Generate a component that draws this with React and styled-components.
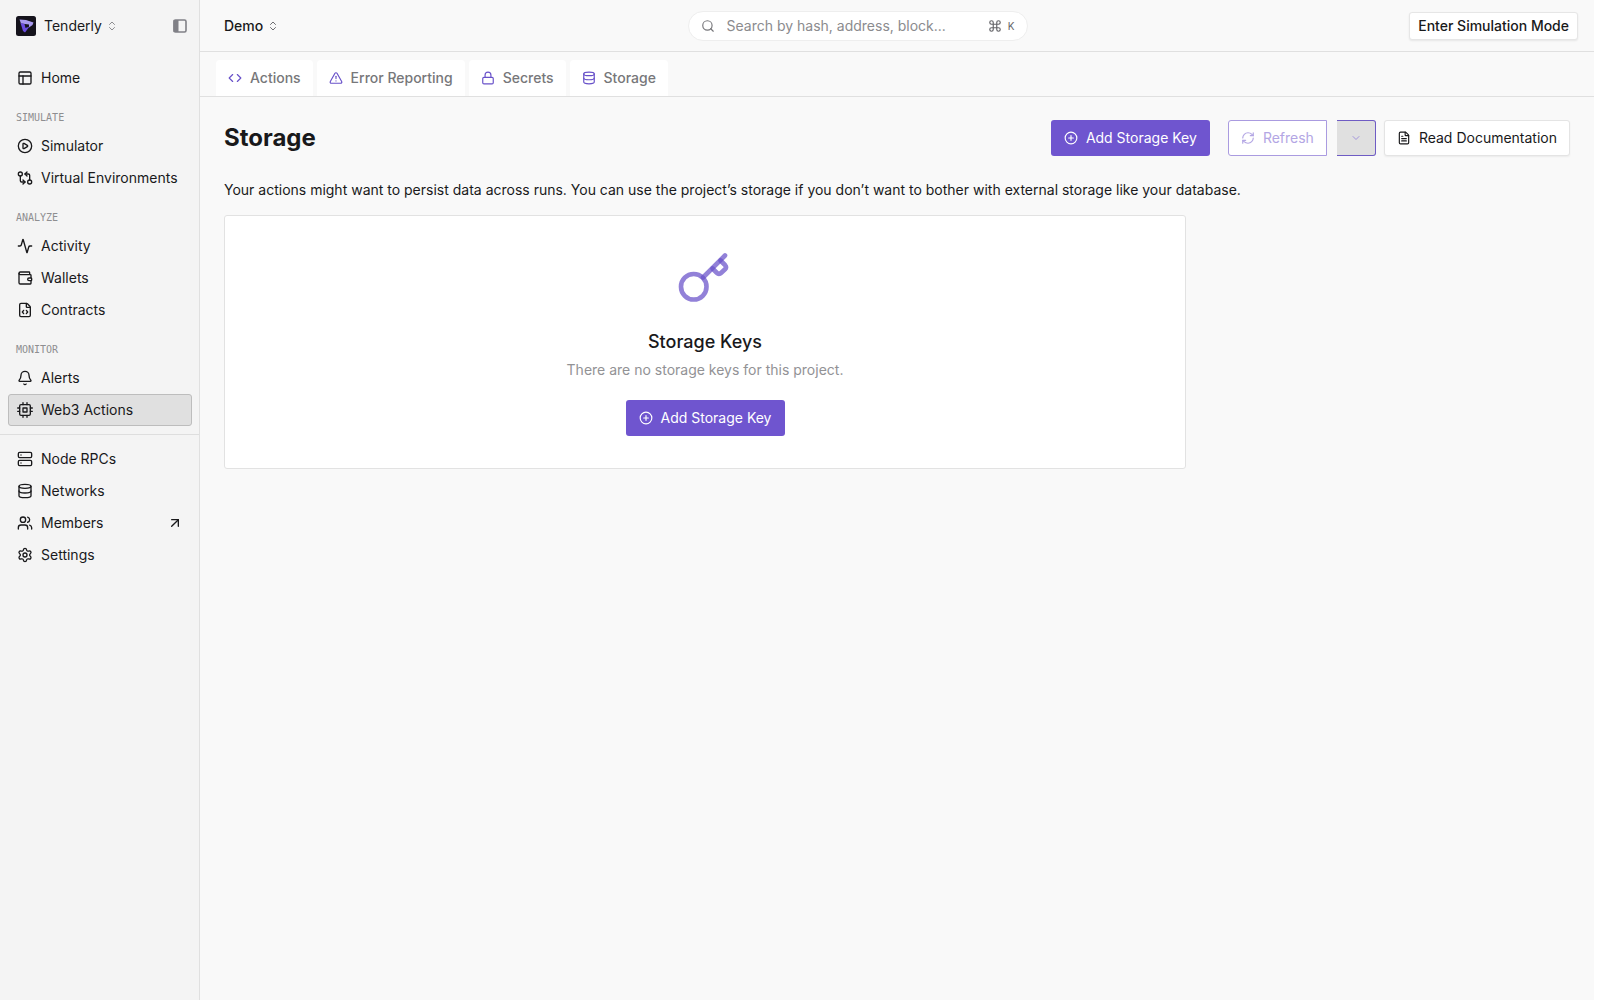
import styled, { createGlobalStyle, css } from "styled-components"
import {
    Activity,
    ArrowUpRight,
    Bell,
    ChevronDown,
    ChevronsUpDown,
    CirclePlay,
    CirclePlus,
    Code,
    Command,
    Database,
    FileCode,
    FileText,
    GitCompareArrows,
    Lock,
    PanelsTopLeft,
    RefreshCw,
    Search,
    Server,
    Settings,
    TriangleAlert,
    Users,
    Wallet,
} from "lucide-react"
import { FiCpu } from "react-icons/fi"

const topLinks = [{ label: "Home", icon: PanelsTopLeft }]

const sections = [
    {
        title: "Simulate",
        links: [
            { label: "Simulator", icon: CirclePlay },
            { label: "Virtual Environments", icon: GitCompareArrows },
        ],
    },
    {
        title: "Analyze",
        links: [
            { label: "Activity", icon: Activity },
            { label: "Wallets", icon: Wallet },
            { label: "Contracts", icon: FileCode },
        ],
    },
    {
        title: "Monitor",
        links: [
            { label: "Alerts", icon: Bell },
            { label: "Web3 Actions", icon: FiCpu, active: true },
        ],
    },
]

const bottomLinks = [
    { label: "Node RPCs", icon: Server },
    { label: "Networks", icon: Database },
    { label: "Members", icon: Users, external: true },
    { label: "Settings", icon: Settings },
]

const tabs = [
    { label: "Actions", icon: Code },
    { label: "Error Reporting", icon: TriangleAlert },
    { label: "Secrets", icon: Lock },
    { label: "Storage", icon: Database },
]

function Logo() {
    return (
        <svg width="20" height="20" viewBox="0 0 20 20" aria-hidden="true">
            <rect width="20" height="20" rx="2.5" fill="#15131c" />
            <path d="M3.5 3.5 L10 4 L17.5 6.5 L16.5 9 L13 11.5 L13 8.5 L5 7.5 Z" fill="#a99af0" />
            <path d="M4.5 7 L8.5 8 L9.5 12 L13.500 10.500 L9 16.500 L7 15 Z" fill="#6a4be0" />
        </svg>
    )
}

function KeyIcon() {
    return (
        <svg width="60" height="60" viewBox="0 0 24 24" fill="none" stroke="#6851c9" strokeOpacity="0.72" strokeWidth="1.85" strokeLinecap="round" strokeLinejoin="round" aria-hidden="true">
            <circle cx="7.5" cy="15.5" r="5.1" />
            <path d="M11.2 11.8 L20 3" />
            <path d="M15 8.2 L16.7 9.9 Q17.6 10.8 18.5 9.9 L20 8.5 Q20.8 7.7 20 6.8 L18.2 5" />
        </svg>
    )
}

function NavLink({ link }) {
    const Icon = link.icon
    return (
        <NavItem href="#" $active={link.active} aria-current={link.active ? "page" : undefined}>
            <Icon size={16} />
            <span>{link.label}</span>
            {link.external && <ArrowUpRight size={16} />}
        </NavItem>
    )
}

export default function App() {
    return (
        <Page>
            <GlobalStyle />
            <Sidebar>
                <SidebarHeader>
                    <AccountButton type="button">
                        <Logo />
                        Tenderly
                        <ChevronsUpDown size={12} color="#8d8d90" />
                    </AccountButton>
                    <CollapseButton type="button" aria-label="Collapse sidebar">
                        <svg width="16" height="16" viewBox="0 0 16 16" fill="none">
                            <rect x="2" y="2" width="12" height="12" rx="1.5" stroke="#808086" strokeWidth="1.6" />
                            <rect x="1.5" y="2" width="5" height="12" fill="#808086" />
                        </svg>
                    </CollapseButton>
                </SidebarHeader>
                <Nav>
                    {topLinks.map((link) => <NavLink key={link.label} link={link} />)}
                    {sections.map((section) => (
                        <Section key={section.title}>
                            <SectionTitle>{section.title}</SectionTitle>
                            {section.links.map((link) => <NavLink key={link.label} link={link} />)}
                        </Section>
                    ))}
                </Nav>
                <BottomNav>
                    {bottomLinks.map((link) => <NavLink key={link.label} link={link} />)}
                </BottomNav>
            </Sidebar>
            <Content>
                <TopBar>
                    <ProjectButton type="button">
                        Demo
                        <ChevronsUpDown size={12} color="#6e6e72" />
                    </ProjectButton>
                    <SearchBox>
                        <Search size={14} color="#77777b" />
                        <input type="text" aria-label="Search" placeholder="Search by hash, address, block..." />
                        <Shortcut>
                            <Command size={14} />
                            <kbd>K</kbd>
                        </Shortcut>
                    </SearchBox>
                    <TopBarEnd>
                        <SimulationButton type="button">Enter Simulation Mode</SimulationButton>
                    </TopBarEnd>
                </TopBar>
                <Tabs>
                    {tabs.map(({ label, icon: Icon }) => (
                        <Tab key={label} href="#">
                            <Icon size={14} />
                            {label}
                        </Tab>
                    ))}
                </Tabs>
                <Main>
                    <PageHeader>
                        <h1>Storage</h1>
                        <Toolbar>
                            <PrimaryButton type="button">
                                <CirclePlus size={14} />
                                Add Storage Key
                            </PrimaryButton>
                            <RefreshGroup>
                                <RefreshButton type="button" disabled>
                                    <RefreshCw size={14} />
                                    Refresh
                                </RefreshButton>
                                <RefreshToggle type="button" disabled aria-label="Refresh interval">
                                    <ChevronDown size={12} />
                                </RefreshToggle>
                            </RefreshGroup>
                            <SecondaryButton type="button">
                                <FileText size={14} />
                                Read Documentation
                            </SecondaryButton>
                        </Toolbar>
                    </PageHeader>
                    <Description>
                        Your actions might want to persist data across runs. You can use the project’s storage if you don’t want to bother with external storage like your database.
                    </Description>
                    <EmptyCard>
                        <KeyIcon />
                        <h2>Storage Keys</h2>
                        <p>There are no storage keys for this project.</p>
                        <PrimaryButton type="button">
                            <CirclePlus size={14} />
                            Add Storage Key
                        </PrimaryButton>
                    </EmptyCard>
                </Main>
            </Content>
        </Page>
    )
}

const GlobalStyle = createGlobalStyle`
    * {
        box-sizing: border-box;
    }
    body {
        margin: 0;
        background-color: #ffffff;
        color: #19191b;
        font-family: Inter, "Liberation Sans", sans-serif;
        font-size: 14px;
        line-height: 20px;
    }
    button, input, kbd {
        font: inherit;
        color: inherit;
    }
    button {
        cursor: pointer;
        white-space: nowrap;
    }
    svg {
        flex-shrink: 0;
    }
`

const Page = styled.div`
    display: flex;
    min-height: 100vh;
    padding-right: 6px;
`

const Sidebar = styled.aside`
    display: flex;
    flex-direction: column;
    flex-shrink: 0;
    width: 200px;
    background-color: #f4f4f4;
    border-right: 1px solid #e0e0e0;
`

const SidebarHeader = styled.div`
    display: flex;
    align-items: center;
    justify-content: space-between;
    height: 52px;
    padding: 0 11px 0 16px;
`

const plainButton = css`
    display: flex;
    align-items: center;
    padding: 0;
    border: none;
    background: none;
`

const AccountButton = styled.button`
    ${plainButton}
    gap: 8px;
    >svg:last-child {
        margin-left: -4px;
    }
`

const CollapseButton = styled.button`
    ${plainButton}
`

const Nav = styled.nav`
    display: flex;
    flex-direction: column;
    padding: 10px 7px 8px 8px;
`

const BottomNav = styled(Nav)`
    padding-top: 8px;
    border-top: 1px solid #dedede;
`

const Section = styled.section`
    display: flex;
    flex-direction: column;
`

const SectionTitle = styled.h2`
    margin: 0;
    padding: 14px 8px 2px;
    font-family: "DejaVu Sans Mono", "Liberation Mono", monospace;
    font-size: 10px;
    font-weight: 400;
    line-height: 20px;
    text-transform: uppercase;
    color: #8e8e90;
`

const NavItem = styled.a`
    display: flex;
    align-items: center;
    gap: 8px;
    height: 32px;
    padding: 0 8px;
    border: 1px solid ${(props) => (props.$active ? "#bdbdbd" : "transparent")};
    border-radius: 3px;
    background-color: ${(props) => (props.$active ? "#e0e0e0" : "transparent")};
    color: inherit;
    text-decoration: none;
    white-space: nowrap;
    >span {
        flex: 1;
    }
`

const Content = styled.div`
    flex: 1;
    min-width: 0;
    background-color: #f9f9f9;
`

const TopBar = styled.header`
    display: grid;
    grid-template-columns: 16fr 340px 19fr;
    align-items: center;
    height: 52px;
    padding: 0 16px 0 24px;
    border-bottom: 1px solid #e0e0e0;
`

const ProjectButton = styled.button`
    ${plainButton}
    gap: 4px;
    font-weight: 500;
`

const SearchBox = styled.div`
    display: flex;
    align-items: center;
    gap: 12px;
    height: 30px;
    padding: 0 12px;
    border: 1px solid #eeeeee;
    border-radius: 15px;
    background-color: #ffffff;
    >input {
        flex: 1;
        min-width: 0;
        padding: 0;
        border: none;
        outline: none;
        background: none;
        &::placeholder {
            color: #8b8b8e;
            opacity: 1;
        }
    }
`

const Shortcut = styled.span`
    display: flex;
    align-items: center;
    gap: 6px;
    color: #656569;
    >kbd {
        font-size: 10px;
    }
`

const TopBarEnd = styled.div`
    display: flex;
    justify-content: flex-end;
`

const SimulationButton = styled.button`
    height: 28px;
    padding: 0 8px;
    border: 1px solid #e6e6e6;
    border-radius: 3px;
    background-color: #ffffff;
    box-shadow: 0 1px 2px rgba(0, 0, 0, 0.08);
    font-weight: 500;
`

const Tabs = styled.nav`
    display: flex;
    align-items: flex-end;
    gap: 4px;
    height: 45px;
    padding: 0 16px;
    border-bottom: 1px solid #e0e0e0;
`

const Tab = styled.a`
    display: flex;
    align-items: center;
    gap: 8px;
    height: 36px;
    padding: 0 12px;
    border-radius: 4px 4px 0 0;
    background-color: #ffffff;
    color: #77777a;
    font-weight: 500;
    text-decoration: none;
    >svg {
        color: #6851c9;
    }
`

const Main = styled.main`
    padding: 23px 24px;
`

const PageHeader = styled.div`
    display: flex;
    align-items: center;
    justify-content: space-between;
    >h1 {
        margin: 0;
        font-size: 24px;
        line-height: 32px;
        font-weight: 700;
    }
`

const Toolbar = styled.div`
    display: flex;
    gap: 8px;
`

const Button = styled.button`
    display: flex;
    align-items: center;
    gap: 8px;
    height: 36px;
    padding: 0 12px;
    border: 1px solid transparent;
    border-radius: 3px;
`

const PrimaryButton = styled(Button)`
    background-color: #6f55cf;
    color: #ffffff;
`

const SecondaryButton = styled(Button)`
    border-color: #e4e4e4;
    background-color: #ffffff;
    box-shadow: 0 1px 2px rgba(0, 0, 0, 0.06);
`

const RefreshGroup = styled.div`
    display: flex;
    gap: 10px;
    margin-left: 10px;
`

const RefreshButton = styled(Button)`
    border-color: #aa9be0;
    border-radius: 3px 0 0 3px;
    background-color: #ffffff;
    color: #b3a6e4;
`

const RefreshToggle = styled(Button)`
    justify-content: center;
    width: 39px;
    border-color: #6f5cc4;
    border-left: none;
    border-radius: 0 3px 3px 0;
    background-color: #e0e0e0;
    color: #a294dc;
`

const Description = styled.p`
    margin: 24px 0 15px;
`

const EmptyCard = styled.section`
    display: flex;
    flex-direction: column;
    align-items: center;
    max-width: 962px;
    padding: 32px;
    border: 1px solid #e2e2e2;
    border-radius: 3px;
    background-color: #ffffff;
    >h2 {
        margin: 20px 0 4px;
        font-size: 18px;
        line-height: 28px;
        font-weight: 500;
    }
    >p {
        margin: 0 0 20px;
        color: #929295;
    }
`
